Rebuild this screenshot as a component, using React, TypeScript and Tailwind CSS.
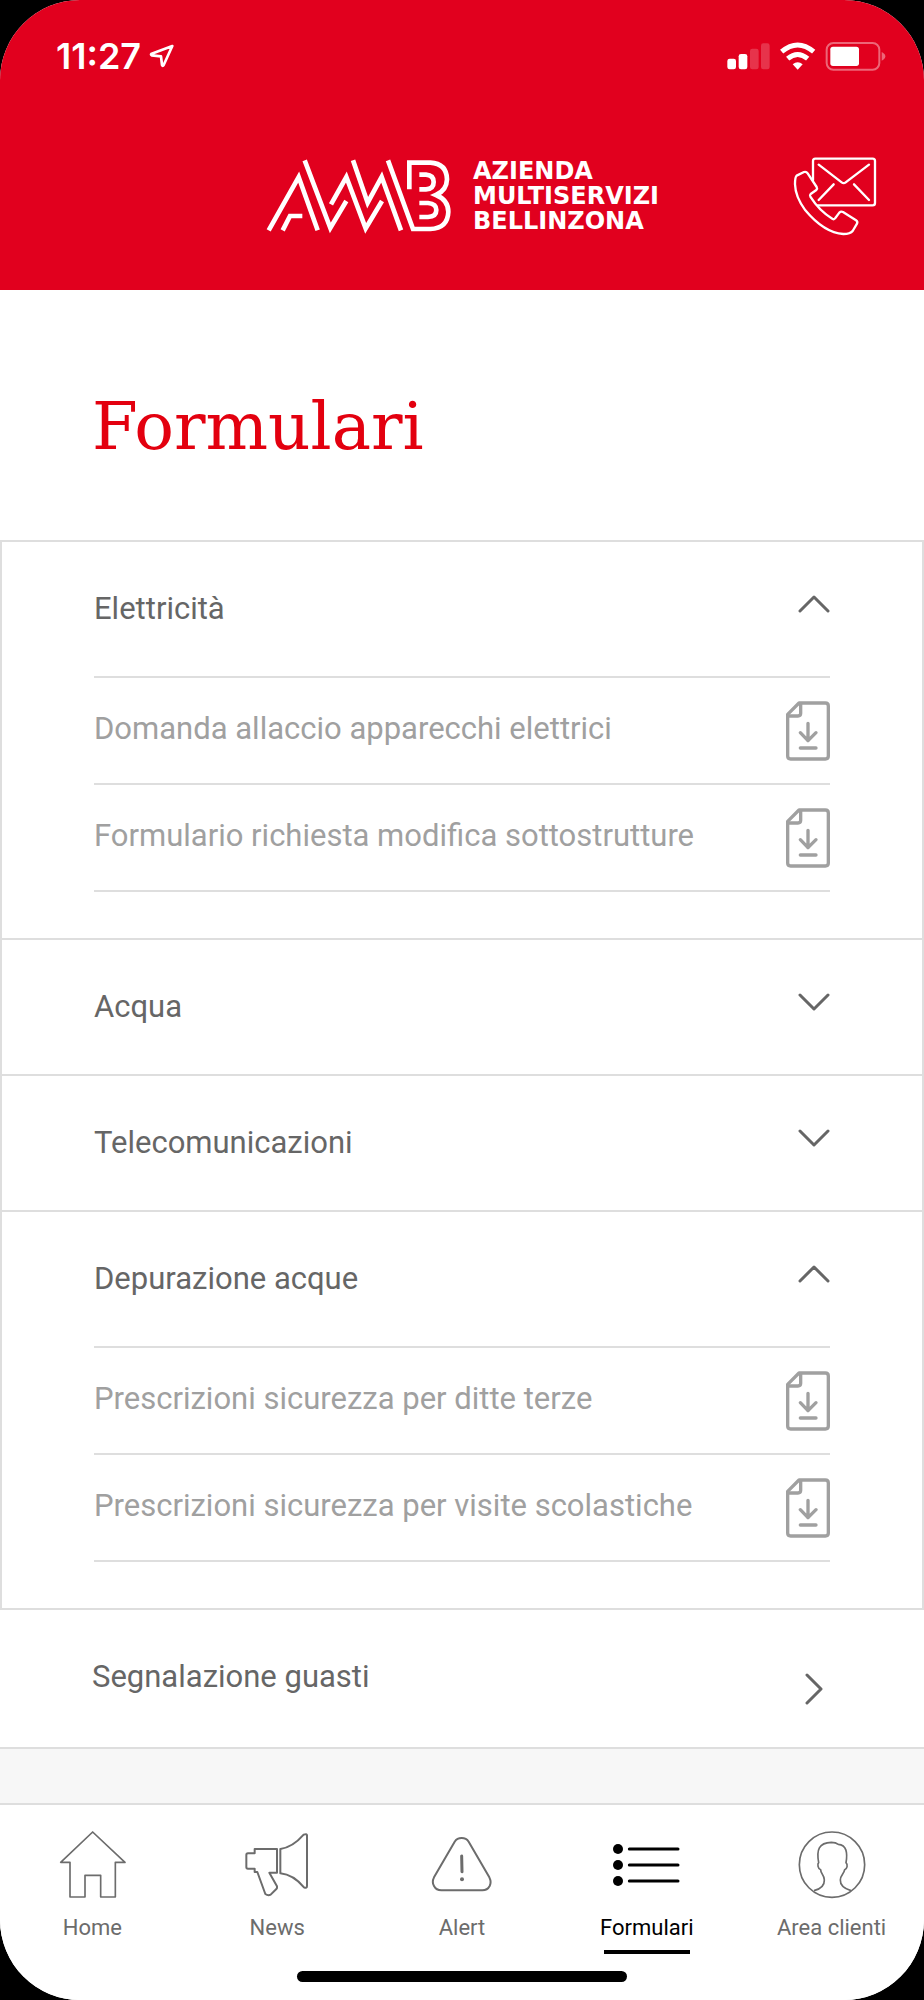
import { useState } from 'react';
import type { ReactNode } from 'react';

interface Section {
  title: string;
  items: string[];
}

const sections: Section[] = [
  {
    title: 'Elettricità',
    items: ['Domanda allaccio apparecchi elettrici', 'Formulario richiesta modifica sottostrutture'],
  },
  { title: 'Acqua', items: [] },
  { title: 'Telecomunicazioni', items: [] },
  {
    title: 'Depurazione acque',
    items: ['Prescrizioni sicurezza per ditte terze', 'Prescrizioni sicurezza per visite scolastiche'],
  },
];

function StatusBar() {
  return (
    <div className="flex h-28 items-center justify-between pr-[38px] pl-[56px]">
      <div className="flex items-center gap-2">
        <span className="font-['Inter',sans-serif] text-[36px] leading-10 font-semibold">11:27</span>
        <svg viewBox="450 128 78 78" className="size-[26px]" fill="none" stroke="currentColor" strokeWidth="8" strokeLinejoin="round">
          <path d="M520 137 L458 160 Q454 163 458 165 L486 168 L489 194 Q491 199 494 194 Z" />
        </svg>
      </div>
      <svg viewBox="140 120 480 90" className="h-[30px] w-[160px]" fill="none">
        <g fill="#fff">
          <rect x="144" y="173" width="26" height="32" rx="7" />
          <rect x="178" y="159" width="26" height="46" rx="7" />
          <rect x="212" y="143" width="26" height="62" rx="7" opacity="0.2" />
          <rect x="245" y="127" width="26" height="78" rx="7" opacity="0.2" />
          <path d="M355 206 L340 190 Q355 177 370 190 Z" />
          <rect x="453" y="137" width="86" height="58" rx="8" />
          <path d="M607 153 Q618 158 618 166 Q618 174 607 179 Z" opacity="0.4" />
        </g>
        <path d="M307 152 Q355 112 403 152" stroke="#fff" strokeWidth="15" />
        <path d="M325 173 Q355 148 385 173" stroke="#fff" strokeWidth="15" />
        <rect x="442" y="126" width="158" height="80" rx="20" stroke="#fff" strokeWidth="6" opacity="0.4" />
      </svg>
    </div>
  );
}

function Logo() {
  return (
    <a href="#" className="flex items-center gap-[21px]">
      <svg viewBox="39 50 561 234" className="h-[78px] w-[187px]" fill="none" stroke="currentColor" strokeWidth="14" strokeMiterlimit="10">
        <path d="M50 270 L140 110 L197 270" />
        <path d="M92 270 L114 227 H151" />
        <path d="M158 60 L235 263 L283 182" />
        <path d="M237 192 L283 110 L341 264 L390 182" />
        <path d="M303 60 L347 187 L389 110 L447 270" />
        <path d="M472 147 V67 H535 Q584 70 585 117 Q584 150 552 164 Q589 179 589 215 Q587 264 535 266 H483 L408 60" />
        <path d="M502 103 H522 Q545 105 545 125 Q545 146 522 147 H502" />
        <path d="M502 188 H528 Q553 190 553 209 Q553 229 528 230 H502" />
      </svg>
      <span className="flex flex-col font-['DejaVu_Sans',sans-serif] text-[24px] leading-[25px] font-bold">
        <span>AZIENDA</span>
        <span>MULTISERVIZI</span>
        <span>BELLINZONA</span>
      </span>
    </a>
  );
}

function ContactIcon() {
  return (
    <svg viewBox="68 45 258 240" className="h-20 w-[86px]" fill="none" stroke="currentColor" strokeWidth="7" strokeLinecap="round" strokeLinejoin="round">
      <path d="M131 118 V60 Q131 53 138 53 H310 Q317 53 317 60 V186 Q317 193 310 193 H146" />
      <path d="M148 71 L217 124 Q223 129 229 124 L299 71" />
      <path d="M193 130 L148 177 M254 130 L299 177" />
      <path d="M82 104 L104 93 Q111 91 115 97 L142 138 Q145 143 141 147 L124 159 Q120 163 123 167 Q150 210 190 234 Q195 236 198 231 L210 215 Q215 210 221 213 L260 238 Q266 242 263 248 L250 270 Q243 279 222 279 Q165 276 108 208 Q78 168 77 130 Q77 108 82 104 Z" />
    </svg>
  );
}

function Chevron({ className = '' }: { className?: string }) {
  return (
    <svg viewBox="0 0 32 18" className={`h-[18px] w-8 ${className}`} fill="none" stroke="#666" strokeWidth="3" strokeLinecap="round" strokeLinejoin="round">
      <path d="M2 16 L16 2 L30 16" />
    </svg>
  );
}

function DownloadIcon() {
  return (
    <svg viewBox="257 512 132 180" className="h-[60px] w-11 shrink-0" fill="none" stroke="#a0a0a0" strokeWidth="10" strokeLinecap="round" strokeLinejoin="round">
      <path d="M296 518 H375 Q384 518 384 527 V677 Q384 686 375 686 H271 Q262 686 262 677 V552 Z" />
      <path d="M301 520 V549 Q301 557 293 557 H264" />
      <path d="M323 579 V631 M300 607 L323 631 L347 607 M300 653 H347" />
    </svg>
  );
}

function AccordionSection({ section }: { section: Section }) {
  const [open, setOpen] = useState(section.items.length > 0);

  return (
    <section className="border-x-2 border-t-2 border-[#dedede] px-[92px]">
      <h2>
        <button
          type="button"
          aria-expanded={open}
          onClick={() => setOpen(!open)}
          className="flex h-[134px] w-full items-center justify-between text-left text-[#666]"
        >
          <span>{section.title}</span>
          <Chevron className={open ? 'mb-2.5' : 'mb-2.5 rotate-180'} />
        </button>
      </h2>
      {open && section.items.length > 0 && (
        <ul className="mb-[46px] border-b-2 border-[#dedede]">
          {section.items.map((item) => (
            <li key={item} className="border-t-2 border-[#dedede]">
              <a href="#" className="flex h-[105px] items-center justify-between text-[#a0a0a0]">
                <span className="pb-1">{item}</span>
                <DownloadIcon />
              </a>
            </li>
          ))}
        </ul>
      )}
    </section>
  );
}

interface NavItemProps {
  label: string;
  viewBox: string;
  active?: boolean;
  children: ReactNode;
}

function NavItem({ label, viewBox, active = false, children }: NavItemProps) {
  return (
    <a
      href="#"
      aria-current={active ? 'page' : undefined}
      className={`flex flex-1 flex-col items-center ${active ? 'text-black' : 'text-[#6c6c6c]'}`}
    >
      <svg viewBox={viewBox} className="size-[68px]" fill="none" stroke="currentColor" strokeWidth="6" strokeLinejoin="round">
        {children}
      </svg>
      <span className="mt-[15px] text-[22px] leading-7 whitespace-nowrap">{label}</span>
      {active && <span className="mt-2 h-1 w-[86px] bg-black" />}
    </a>
  );
}

function BottomNav() {
  return (
    <nav className="h-[197px] border-t-2 border-[#dedede] bg-white pt-[26px]">
      <div className="flex h-[140px]">
        <NavItem label="Home" viewBox="174 693 204 204">
          <path d="M278 696 L375 787 H346 V891 H302 V826 H255 V891 H210 V787 H182 Z" strokeWidth="5" />
        </NavItem>
        <NavItem label="News" viewBox="729 693 204 204">
          <path d="M764 747 H831 V818 H808 L831 859 Q832 864 829 867 L812 884 Q804 888 796 882 L772 816 H764 V806 H744 Q739 806 739 802 V765 Q739 760 744 760 H764 Z" />
          <path d="M841 747 Q878 742 911 704 Q921 700 921 706 V858 Q921 866 912 862 Q880 824 841 820 Z" />
        </NavItem>
        <NavItem label="Alert" viewBox="84 93 204 204">
          <path d="M164 125 Q171 114 185 114 Q199 114 206 125 L268 232 Q275 246 269 258 Q262 271 247 271 H124 Q109 271 102 258 Q95 246 102 232 Z" />
          <path d="M185 168 L186 215" strokeWidth="9" strokeLinecap="round" />
          <circle cx="186" cy="238" r="6" fill="currentColor" stroke="none" />
        </NavItem>
        <NavItem label="Formulari" viewBox="639 93 204 204" active>
          <g fill="currentColor" stroke="none">
            <circle cx="654" cy="147" r="15" />
            <circle cx="654" cy="195" r="15" />
            <circle cx="654" cy="243" r="15" />
          </g>
          <path d="M688 147 H834 M688 195 H834 M688 243 H834" strokeWidth="9" strokeLinecap="round" />
        </NavItem>
        <NavItem label="Area clienti" viewBox="1188 93 204 204">
          <circle cx="1290" cy="194" r="98" strokeWidth="5" />
          <path
            strokeWidth="5"
            d="M1236 272 Q1268 264 1267 240 C1266 222 1256 222 1256 209 C1247 206 1246 192 1250 188 C1243 150 1250 128 1288 127 C1300 127 1304 129 1309 133 C1334 134 1337 160 1332 188 C1338 194 1336 206 1328 209 C1326 222 1315 225 1315 240 Q1314 262 1347 272"
          />
        </NavItem>
      </div>
      <div className="mx-auto h-[11px] w-[330px] rounded-full bg-black" />
    </nav>
  );
}

export default function App() {
  return (
    <div className="min-h-screen bg-black">
      <div className="flex min-h-screen flex-col overflow-hidden rounded-[80px] bg-white font-['Roboto',sans-serif] text-[31px] leading-10">
        <header className="h-[290px] bg-[#e1001e] text-white">
          <StatusBar />
          <div className="grid h-[168px] grid-cols-[1fr_auto_1fr] items-center">
            <div />
            <Logo />
            <button type="button" aria-label="Contatti" className="mr-[46px] justify-self-end">
              <ContactIcon />
            </button>
          </div>
        </header>

        <main className="flex flex-1 flex-col">
          <h1 className="px-[92px] pt-[105px] pb-[81px] font-['DejaVu_Serif',serif] text-[66px] leading-[64px] text-[#e3000f]">
            Formulari
          </h1>
          {sections.map((section) => (
            <AccordionSection key={section.title} section={section} />
          ))}
          <a
            href="#"
            className="flex h-[141px] items-center justify-between border-y-2 border-[#dedede] pr-[94px] pl-[92px] text-[#666]"
          >
            <span className="pb-1">Segnalazione guasti</span>
            <Chevron className="mt-5 rotate-90" />
          </a>
          <div className="min-h-10 flex-1 bg-[#f7f7f7]" />
        </main>

        <BottomNav />
      </div>
    </div>
  );
}
